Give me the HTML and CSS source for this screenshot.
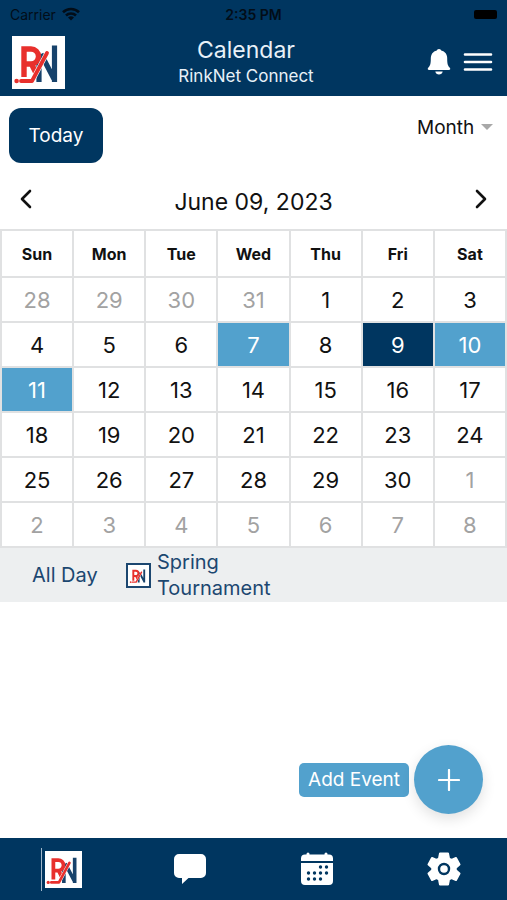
FILE: index.html
```html
<!DOCTYPE html>
<html lang="en">
<head>
<meta charset="utf-8">
<meta name="viewport" content="width=device-width, initial-scale=1">
<title>Calendar</title>
<link rel="stylesheet" href="styles.css">
</head>
<body>
<svg width="0" height="0" class="defs" aria-hidden="true">
  <symbol id="logo" viewBox="0 0 53 53">
    <rect width="53" height="53" fill="#fff"/>
    <path d="M27 46V20M42.500 46V9.500M29 18L42 43" fill="none" stroke="#17426b" stroke-width="5.200"/>
    <path d="M12 41V13h7a7 7 0 0 1 0 15H12M19 27l5 10" fill="none" stroke="#e8302c" stroke-width="5.400"/>
    <path d="M35 17L20 45H9" fill="none" stroke="#fff" stroke-width="5" stroke-linecap="round" stroke-linejoin="round"/>
    <path d="M35 17L20 45H9" fill="none" stroke="#e8302c" stroke-width="3.800" stroke-linecap="round" stroke-linejoin="round"/>
    <circle cx="4.600" cy="45" r="2.300" fill="#e8302c"/>
  </symbol>
</svg>
<header class="top">
  <div class="status">
    <span class="carrier">Carrier
      <svg width="18" height="14" viewBox="0 0 18 14" fill="none" stroke="currentColor" stroke-width="2.600"><path d="M1 5.200a11.500 11.500 0 0 1 16 0M4 8.500a7.200 7.200 0 0 1 10 0"/><path d="M9 13.500L6 10.600a4.300 4.300 0 0 1 6 0z" fill="currentColor" stroke="none"/></svg>
    </span>
    <span class="time">2:35 PM</span>
    <span class="battery"></span>
  </div>
  <div class="bar">
    <svg class="brand" role="img" aria-label="RinkNet"><use href="#logo"/></svg>
    <div class="titles">
      <h1>Calendar</h1>
      <p>RinkNet Connect</p>
    </div>
    <div class="actions">
      <button type="button" aria-label="Notifications"><svg width="24" height="28" viewBox="0 0 24 28" fill="#fff"><path d="M12 1c1.300 0 2 .8 2.200 1.500 4 1 6 3.900 6 8 0 5.500.6 7.200 2.600 9.200.9.900.5 2.300-.9 2.300H2.100c-1.400 0-1.800-1.400-.9-2.300 2-2 2.600-3.700 2.600-9.200 0-4.100 2-7 6-8C10 1.800 10.700 1 12 1zM8.300 23.500h7.400c-.3 1.900-1.800 3-3.700 3s-3.400-1.100-3.700-3z"/></svg></button>
      <button type="button" aria-label="Menu"><svg width="30" height="20" viewBox="0 0 30 20" stroke="#fff" stroke-width="2.600" stroke-linecap="round"><path d="M2 2.500h26M2 10h26M2 17.500h26"/></svg></button>
    </div>
  </div>
</header>
<main>
  <div class="tools">
    <button type="button" class="today">Today</button>
    <label class="view"><select aria-label="View"><option>Month</option><option>Week</option><option>Day</option></select></label>
  </div>
  <div class="pager">
    <button type="button" aria-label="Previous month"><svg width="12" height="20" viewBox="0 0 12 20"><path d="M10 2L2 10l8 8"/></svg></button>
    <h2>June 09, 2023</h2>
    <button type="button" aria-label="Next month"><svg width="12" height="20" viewBox="0 0 12 20"><path d="M2 2l8 8-8 8"/></svg></button>
  </div>
  <table class="month">
    <thead><tr><th>Sun</th><th>Mon</th><th>Tue</th><th>Wed</th><th>Thu</th><th>Fri</th><th>Sat</th></tr></thead>
    <tbody>
      <tr><td class="out">28</td><td class="out">29</td><td class="out">30</td><td class="out">31</td><td>1</td><td>2</td><td>3</td></tr>
      <tr><td>4</td><td>5</td><td>6</td><td class="busy">7</td><td>8</td><td class="selected">9</td><td class="busy">10</td></tr>
      <tr><td class="busy">11</td><td>12</td><td>13</td><td>14</td><td>15</td><td>16</td><td>17</td></tr>
      <tr><td>18</td><td>19</td><td>20</td><td>21</td><td>22</td><td>23</td><td>24</td></tr>
      <tr><td>25</td><td>26</td><td>27</td><td>28</td><td>29</td><td>30</td><td class="out">1</td></tr>
      <tr><td class="out">2</td><td class="out">3</td><td class="out">4</td><td class="out">5</td><td class="out">6</td><td class="out">7</td><td class="out">8</td></tr>
    </tbody>
  </table>
  <div class="event">
    <span class="when">All Day</span>
    <svg class="badge" aria-hidden="true"><use href="#logo"/></svg>
    <span class="name">Spring Tournament</span>
  </div>
  <div class="add">
    <span class="add-label" id="add-label">Add Event</span>
    <button type="button" class="fab" aria-labelledby="add-label"><svg width="22" height="22" viewBox="0 0 22 22" stroke="#fff" stroke-width="2.200" stroke-linecap="round"><path d="M11 1v20M1 11h20"/></svg></button>
  </div>
</main>
<nav class="tabs">
  <a href="#home" aria-label="Home"><span class="home"><svg width="37" height="37"><use href="#logo"/></svg></span></a>
  <a href="#messages" aria-label="Messages"><svg width="34" height="32" viewBox="0 0 34 32" fill="#fff"><path d="M6 1h22a5 5 0 0 1 5 5v14a5 5 0 0 1-5 5H15.500L9 31v-6H6a5 5 0 0 1-5-5V6a5 5 0 0 1 5-5z"/></svg></a>
  <a href="#calendar" aria-label="Calendar"><svg width="34" height="34" viewBox="0 0 34 34"><path fill="#fff" d="M5 2.500h1.500V2a1.500 1.500 0 0 1 3 0v.5h15V2a1.500 1.500 0 0 1 3 0v.5H29a4 4 0 0 1 4 4V9H1V6.500a4 4 0 0 1 4-4zM1 11h32v18a4 4 0 0 1-4 4H5a4 4 0 0 1-4-4z"/><path d="M20.500 15h.01M26.500 15h.01M8.500 21h.01M14.500 21h.01M20.500 21h.01M26.500 21h.01M8.500 27h.01M14.500 27h.01M20.500 27h.01" stroke="#003660" stroke-width="3.400" stroke-linecap="round"/></svg></a>
  <a href="#settings" aria-label="Settings"><svg width="34" height="34" viewBox="0 0 34 34"><path fill="#fff" stroke="#fff" stroke-width="2" stroke-linejoin="round" d="M13 1.500h8l1 5 2.500 1.400L29 6l3.500 6.500-3.700 3.200v2.600l3.700 3.200L29 28l-4.500-1.900L22 27.500l-1 5h-8l-1-5-2.500-1.400L5 28l-3.500-6.500 3.700-3.200v-2.600l-3.700-3.200L5 6l4.500 1.900L12 6.500z"/><circle cx="17" cy="17" r="5" fill="#fff" stroke="#003660" stroke-width="2.400"/></svg></a>
</nav>
</body>
</html>
```
FILE: styles.css
```css
:root {
  --navy: #003660;
  --blue: #52a1cd;
  --line: #e0e1e2;
}

* { box-sizing: border-box; }

body {
  margin: 0;
  min-height: 100vh;
  display: flex;
  flex-direction: column;
  background: #fff;
  color: #111;
  font-family: Inter, "Liberation Sans", sans-serif;
}

h1, h2, p { margin: 0; font-weight: 400; }

button {
  padding: 0;
  border: 0;
  background: none;
  color: inherit;
  font: inherit;
}

svg { display: block; }

.defs { position: absolute; }

.top { background: var(--navy); color: #e8f1f8; }

.status {
  display: grid;
  grid-template-columns: 1fr auto 1fr;
  align-items: center;
  height: 28px;
  padding: 0 10px;
  color: #020d18;
  font-size: 14px;
}
.carrier { display: flex; align-items: center; gap: 6px; }
.time { font-weight: 600; }
.battery {
  justify-self: end;
  width: 23px;
  height: 9px;
  border-radius: 2px;
  background: #000;
}

.bar {
  display: grid;
  grid-template-columns: auto 1fr auto;
  align-items: center;
  height: 68px;
  padding: 0 14px 0 12px;
}
.brand { width: 53px; height: 53px; }
.titles { text-align: center; }
.titles h1 { font-size: 23px; line-height: 28px; }
.titles p { font-size: 17px; line-height: 24px; }
.actions { display: flex; align-items: center; justify-content: flex-end; gap: 12px; }

main { flex: 1; position: relative; }

.tools {
  display: flex;
  justify-content: space-between;
  align-items: flex-start;
  padding: 12px 14px 0 9px;
}
.today {
  width: 94px;
  height: 55px;
  border-radius: 12px;
  background: var(--navy);
  color: #fff;
  font-size: 19px;
}
.view { display: flex; align-items: center; gap: 6px; height: 38px; }
.view::after {
  content: "";
  border: 6px solid transparent;
  border-top-color: #a8a8a8;
  border-bottom: 0;
}
.view select {
  appearance: none;
  border: 0;
  background: none;
  color: inherit;
  font: inherit;
  font-size: 19px;
}

.pager {
  display: flex;
  align-items: center;
  justify-content: space-between;
  height: 66px;
  padding: 6px 20px 0;
}
.pager h2 { padding-top: 6px; font-size: 23px; line-height: 28px; }
.pager path {
  fill: none;
  stroke: #111;
  stroke-width: 2.6;
  stroke-linecap: round;
  stroke-linejoin: round;
}
.pager button { height: 32px; }

.month {
  width: 100%;
  border-collapse: collapse;
  table-layout: fixed;
  text-align: center;
}
.month th, .month td { padding: 0; border: 2px solid var(--line); }
.month th { height: 47px; font-size: 16px; font-weight: 700; }
.month td { height: 45px; font-size: 22px; }
.month .out { color: #a2a2a2; }
.month .busy { background: var(--blue); color: #fff; }
.month .selected { background: var(--navy); color: #fff; }

.event {
  display: flex;
  align-items: center;
  height: 54px;
  padding-left: 32px;
  background: #edeff0;
  color: #1c4770;
  font-size: 20px;
  line-height: 26px;
}
.when { width: 94px; }
.badge {
  width: 25px;
  height: 25px;
  margin-right: 6px;
  padding: 1px;
  border: 2px solid #1c4770;
  background: #fff;
}
.name { width: 130px; }

.add {
  position: absolute;
  right: 24px;
  bottom: 24px;
  display: flex;
  align-items: center;
  gap: 5px;
}
.add-label {
  padding: 4px 9px;
  border-radius: 5px;
  background: var(--blue);
  color: #fff;
  font-size: 19px;
  line-height: 26px;
}
.fab {
  display: grid;
  place-items: center;
  width: 69px;
  height: 69px;
  border-radius: 50%;
  background: var(--blue);
  box-shadow: 0 5px 14px rgba(0, 0, 0, 0.12);
}

.tabs {
  display: grid;
  grid-template-columns: repeat(4, 1fr);
  height: 62px;
  background: var(--navy);
}
.tabs a { display: grid; place-items: center; }
.home { padding: 3px; border-left: 1px solid #9fb6c9; }
```
